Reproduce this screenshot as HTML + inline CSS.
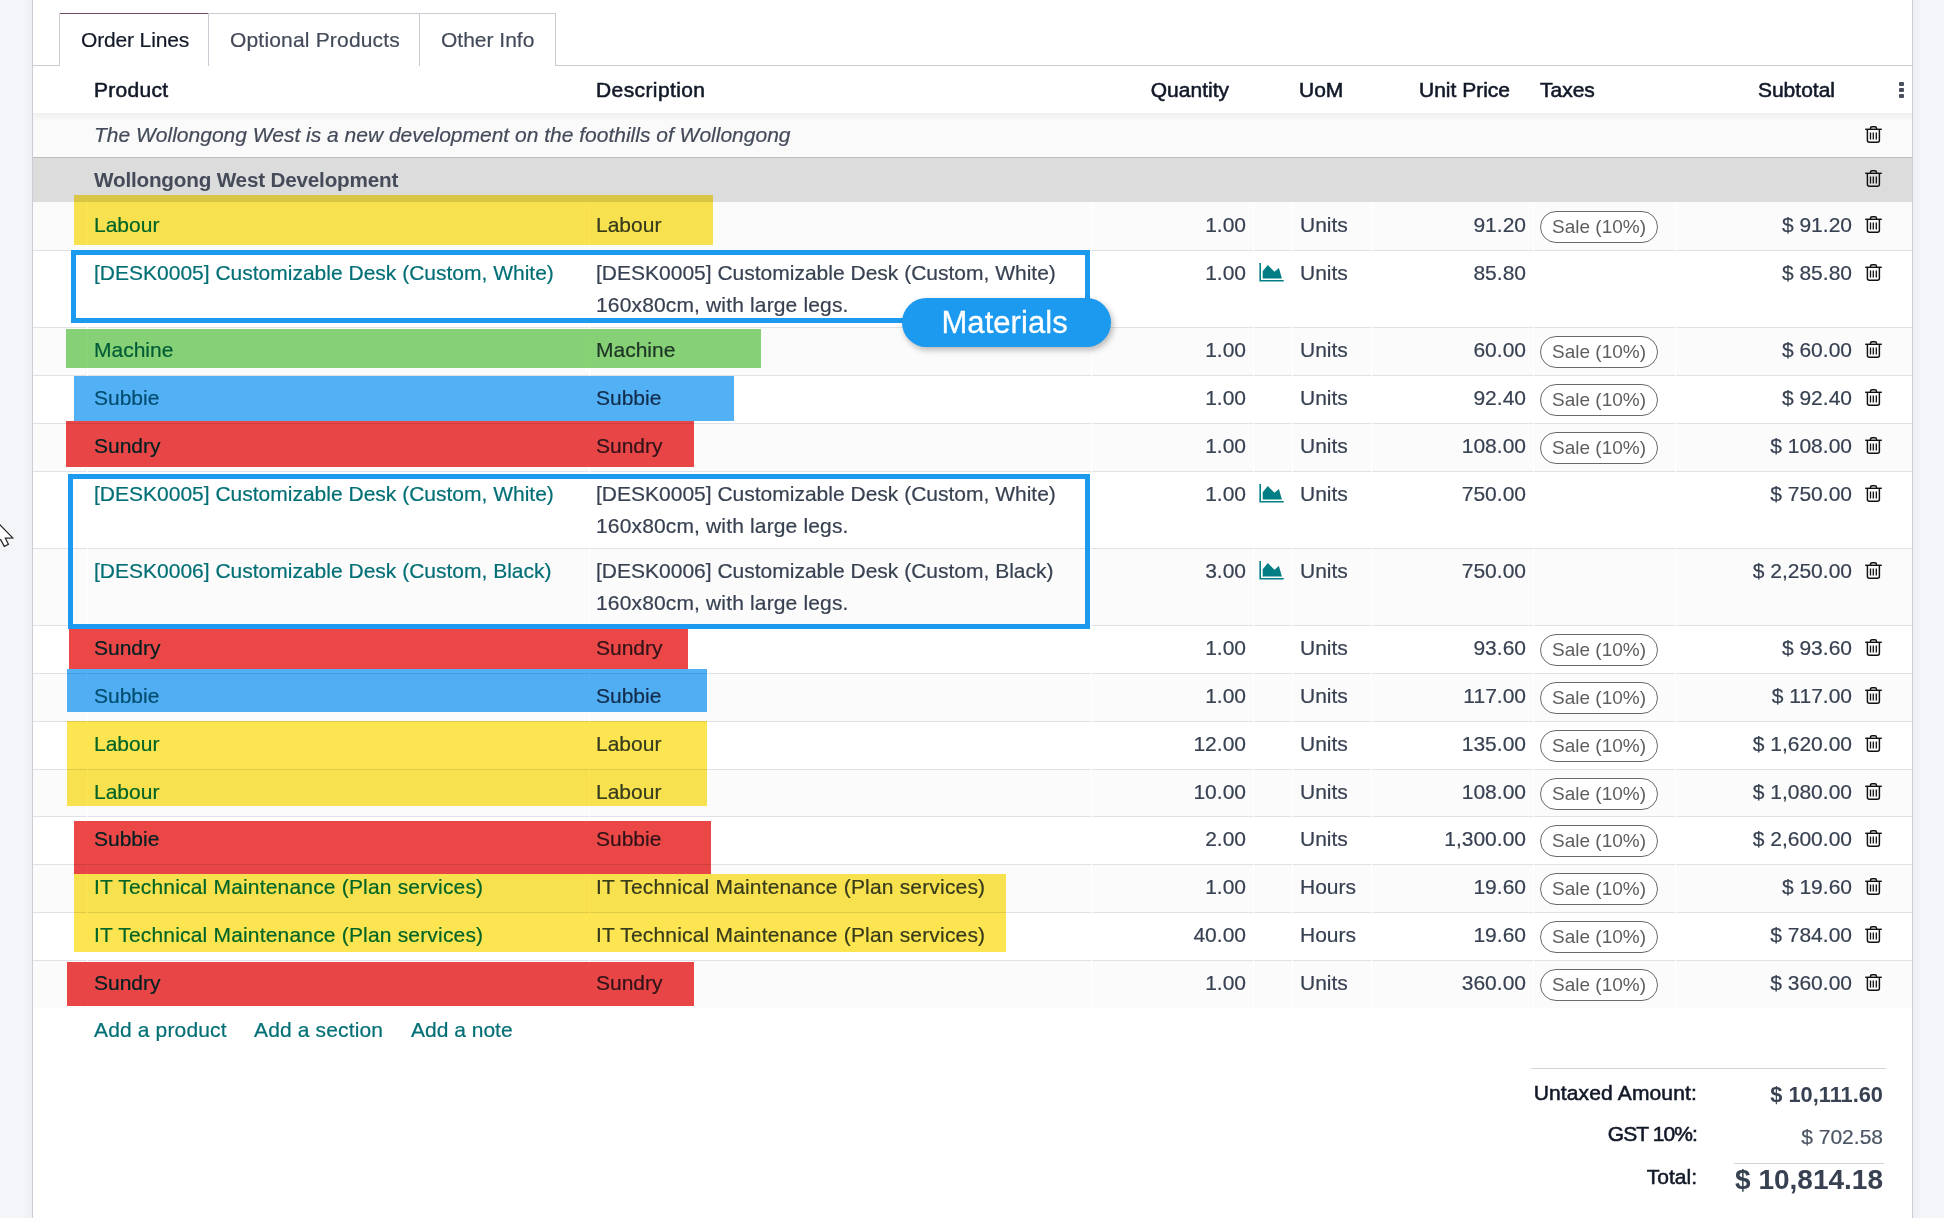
<!DOCTYPE html>
<html><head><meta charset="utf-8"><style>
html,body{margin:0;padding:0}
body{width:1944px;height:1218px;overflow:hidden;position:relative;background:#fff;font-family:"Liberation Sans",sans-serif}
.t{position:absolute;white-space:nowrap}
</style></head><body>
<div style="position:absolute;left:0px;top:0px;width:32px;height:1218px;background:linear-gradient(to right,#f4f5f9 0,#f3f5f9 22px,#edeff3 32px)"></div>
<div style="position:absolute;left:32px;top:0px;width:1px;height:1218px;background:#cacdd4"></div>
<div style="position:absolute;left:33px;top:0px;width:1879px;height:1218px;background:#fff"></div>
<div style="position:absolute;left:1912px;top:0px;width:1px;height:1218px;background:#cacdd4"></div>
<div style="position:absolute;left:1913px;top:0px;width:31px;height:1218px;background:linear-gradient(to left,#f4f5f9 0,#f3f5f9 22px,#edeff3 31px)"></div>
<div style="position:absolute;left:33px;top:65px;width:26px;height:1px;background:#c9ccd3"></div>
<div style="position:absolute;left:555px;top:65px;width:1357px;height:1px;background:#c9ccd3"></div>
<div style="position:absolute;left:59px;top:13px;width:150px;height:1px;background:#714b67"></div>
<div style="position:absolute;left:59px;top:13px;width:1px;height:53px;background:#c9ccd3"></div>
<div style="position:absolute;left:208px;top:13px;width:1px;height:53px;background:#c9ccd3"></div>
<div style="position:absolute;left:209px;top:13px;width:211px;height:1px;background:#c9ccd3"></div>
<div style="position:absolute;left:419px;top:13px;width:1px;height:53px;background:#c9ccd3"></div>
<div style="position:absolute;left:420px;top:13px;width:136px;height:1px;background:#c9ccd3"></div>
<div style="position:absolute;left:555px;top:13px;width:1px;height:53px;background:#c9ccd3"></div>
<div class="t" style="left:81px;top:27.22px;font-size:21px;line-height:25px;font-weight:400;color:#111827;font-style:normal;letter-spacing:-0.15px;-webkit-text-stroke:0.2px currentColor;">Order Lines</div>
<div class="t" style="left:230px;top:27.22px;font-size:21px;line-height:25px;font-weight:400;color:#434b5a;font-style:normal;letter-spacing:0.18px;-webkit-text-stroke:0.2px currentColor;">Optional Products</div>
<div class="t" style="left:441px;top:27.22px;font-size:21px;line-height:25px;font-weight:400;color:#434b5a;font-style:normal;-webkit-text-stroke:0.2px currentColor;">Other Info</div>
<div class="t" style="left:94px;top:77.22px;font-size:21px;line-height:25px;font-weight:400;color:#111827;font-style:normal;letter-spacing:0.3px;-webkit-text-stroke:0.55px currentColor;">Product</div>
<div class="t" style="left:596px;top:77.22px;font-size:21px;line-height:25px;font-weight:400;color:#111827;font-style:normal;letter-spacing:0.4px;-webkit-text-stroke:0.55px currentColor;">Description</div>
<div class="t" style="right:715px;top:77.22px;font-size:21px;line-height:25px;font-weight:400;color:#111827;font-style:normal;-webkit-text-stroke:0.55px currentColor;">Quantity</div>
<div class="t" style="left:1299px;top:77.22px;font-size:21px;line-height:25px;font-weight:400;color:#111827;font-style:normal;-webkit-text-stroke:0.55px currentColor;">UoM</div>
<div class="t" style="right:434px;top:77.22px;font-size:21px;line-height:25px;font-weight:400;color:#111827;font-style:normal;-webkit-text-stroke:0.55px currentColor;">Unit Price</div>
<div class="t" style="left:1540px;top:77.22px;font-size:21px;line-height:25px;font-weight:400;color:#111827;font-style:normal;-webkit-text-stroke:0.55px currentColor;">Taxes</div>
<div class="t" style="right:109px;top:77.22px;font-size:21px;line-height:25px;font-weight:400;color:#111827;font-style:normal;-webkit-text-stroke:0.55px currentColor;">Subtotal</div>
<div style="position:absolute;left:1899px;top:81.5px;width:4.5px;height:4.5px;border-radius:1px;background:#4a5060"></div>
<div style="position:absolute;left:1899px;top:87.5px;width:4.5px;height:4.5px;border-radius:1px;background:#4a5060"></div>
<div style="position:absolute;left:1899px;top:93.5px;width:4.5px;height:4.5px;border-radius:1px;background:#4a5060"></div>
<div style="position:absolute;left:33px;top:113px;width:1879px;height:44px;background:#fafafa"></div>
<div style="position:absolute;left:33px;top:113px;width:1879px;height:8px;background:linear-gradient(#eeeeee,#fafafa)"></div>
<div class="t" style="left:94px;top:122.22px;font-size:21px;line-height:25px;font-weight:400;color:#434a59;font-style:italic;-webkit-text-stroke:0.2px currentColor;">The Wollongong West is a new development on the foothills of Wollongong</div>
<div style="position:absolute;left:33px;top:157px;width:1879px;height:1px;background:#bdbdbd"></div>
<div style="position:absolute;left:33px;top:158px;width:1879px;height:44px;background:#dcdcdc"></div>
<div class="t" style="left:94px;top:167.33px;font-size:20.7px;line-height:25px;font-weight:700;color:#454b59;font-style:normal;letter-spacing:-0.2px;">Wollongong West Development</div>
<div style="position:absolute;left:1864px;top:124px;width:20px;height:22px"><svg width="20" height="22" viewBox="0 0 20 22" fill="none" stroke="#111" stroke-width="1.45"><path d="M1.2 5.3H17.8"/><path d="M6.5 5.3V4.3Q6.5 2.7 8.1 2.7H10.9Q12.5 2.7 12.5 4.3V5.3"/><path d="M3.4 5.3V16.3Q3.4 18.3 5.4 18.3H13.4Q15.4 18.3 15.4 16.3V5.3"/><path d="M6.5 8.4V15.5M9.3 8.4V15.5M12.3 8.4V15.5" stroke-width="1.3"/></svg></div>
<div style="position:absolute;left:1864px;top:168.3px;width:20px;height:22px"><svg width="20" height="22" viewBox="0 0 20 22" fill="none" stroke="#111" stroke-width="1.45"><path d="M1.2 5.3H17.8"/><path d="M6.5 5.3V4.3Q6.5 2.7 8.1 2.7H10.9Q12.5 2.7 12.5 4.3V5.3"/><path d="M3.4 5.3V16.3Q3.4 18.3 5.4 18.3H13.4Q15.4 18.3 15.4 16.3V5.3"/><path d="M6.5 8.4V15.5M9.3 8.4V15.5M12.3 8.4V15.5" stroke-width="1.3"/></svg></div>
<div style="position:absolute;left:33px;top:202px;width:1879px;height:48px;background:#fbfbfc"></div>
<div style="position:absolute;left:87px;top:202px;width:1px;height:48px;background:#ffffff"></div>
<div style="position:absolute;left:589px;top:202px;width:1px;height:48px;background:#ffffff"></div>
<div style="position:absolute;left:1091px;top:202px;width:1px;height:48px;background:#ffffff"></div>
<div style="position:absolute;left:1253px;top:202px;width:1px;height:48px;background:#ffffff"></div>
<div style="position:absolute;left:1292px;top:202px;width:1px;height:48px;background:#ffffff"></div>
<div style="position:absolute;left:1371px;top:202px;width:1px;height:48px;background:#ffffff"></div>
<div style="position:absolute;left:1533px;top:202px;width:1px;height:48px;background:#ffffff"></div>
<div style="position:absolute;left:1675px;top:202px;width:1px;height:48px;background:#ffffff"></div>
<div style="position:absolute;left:33px;top:250px;width:1879px;height:77px;background:#ffffff"></div>
<div style="position:absolute;left:33px;top:327px;width:1879px;height:48px;background:#fbfbfc"></div>
<div style="position:absolute;left:87px;top:327px;width:1px;height:48px;background:#ffffff"></div>
<div style="position:absolute;left:589px;top:327px;width:1px;height:48px;background:#ffffff"></div>
<div style="position:absolute;left:1091px;top:327px;width:1px;height:48px;background:#ffffff"></div>
<div style="position:absolute;left:1253px;top:327px;width:1px;height:48px;background:#ffffff"></div>
<div style="position:absolute;left:1292px;top:327px;width:1px;height:48px;background:#ffffff"></div>
<div style="position:absolute;left:1371px;top:327px;width:1px;height:48px;background:#ffffff"></div>
<div style="position:absolute;left:1533px;top:327px;width:1px;height:48px;background:#ffffff"></div>
<div style="position:absolute;left:1675px;top:327px;width:1px;height:48px;background:#ffffff"></div>
<div style="position:absolute;left:33px;top:375px;width:1879px;height:48px;background:#ffffff"></div>
<div style="position:absolute;left:33px;top:423px;width:1879px;height:48px;background:#fbfbfc"></div>
<div style="position:absolute;left:87px;top:423px;width:1px;height:48px;background:#ffffff"></div>
<div style="position:absolute;left:589px;top:423px;width:1px;height:48px;background:#ffffff"></div>
<div style="position:absolute;left:1091px;top:423px;width:1px;height:48px;background:#ffffff"></div>
<div style="position:absolute;left:1253px;top:423px;width:1px;height:48px;background:#ffffff"></div>
<div style="position:absolute;left:1292px;top:423px;width:1px;height:48px;background:#ffffff"></div>
<div style="position:absolute;left:1371px;top:423px;width:1px;height:48px;background:#ffffff"></div>
<div style="position:absolute;left:1533px;top:423px;width:1px;height:48px;background:#ffffff"></div>
<div style="position:absolute;left:1675px;top:423px;width:1px;height:48px;background:#ffffff"></div>
<div style="position:absolute;left:33px;top:471px;width:1879px;height:77px;background:#ffffff"></div>
<div style="position:absolute;left:33px;top:548px;width:1879px;height:77px;background:#fbfbfc"></div>
<div style="position:absolute;left:87px;top:548px;width:1px;height:77px;background:#ffffff"></div>
<div style="position:absolute;left:589px;top:548px;width:1px;height:77px;background:#ffffff"></div>
<div style="position:absolute;left:1091px;top:548px;width:1px;height:77px;background:#ffffff"></div>
<div style="position:absolute;left:1253px;top:548px;width:1px;height:77px;background:#ffffff"></div>
<div style="position:absolute;left:1292px;top:548px;width:1px;height:77px;background:#ffffff"></div>
<div style="position:absolute;left:1371px;top:548px;width:1px;height:77px;background:#ffffff"></div>
<div style="position:absolute;left:1533px;top:548px;width:1px;height:77px;background:#ffffff"></div>
<div style="position:absolute;left:1675px;top:548px;width:1px;height:77px;background:#ffffff"></div>
<div style="position:absolute;left:33px;top:625px;width:1879px;height:48px;background:#ffffff"></div>
<div style="position:absolute;left:33px;top:673px;width:1879px;height:48px;background:#fbfbfc"></div>
<div style="position:absolute;left:87px;top:673px;width:1px;height:48px;background:#ffffff"></div>
<div style="position:absolute;left:589px;top:673px;width:1px;height:48px;background:#ffffff"></div>
<div style="position:absolute;left:1091px;top:673px;width:1px;height:48px;background:#ffffff"></div>
<div style="position:absolute;left:1253px;top:673px;width:1px;height:48px;background:#ffffff"></div>
<div style="position:absolute;left:1292px;top:673px;width:1px;height:48px;background:#ffffff"></div>
<div style="position:absolute;left:1371px;top:673px;width:1px;height:48px;background:#ffffff"></div>
<div style="position:absolute;left:1533px;top:673px;width:1px;height:48px;background:#ffffff"></div>
<div style="position:absolute;left:1675px;top:673px;width:1px;height:48px;background:#ffffff"></div>
<div style="position:absolute;left:33px;top:721px;width:1879px;height:48px;background:#ffffff"></div>
<div style="position:absolute;left:33px;top:769px;width:1879px;height:47px;background:#fbfbfc"></div>
<div style="position:absolute;left:87px;top:769px;width:1px;height:47px;background:#ffffff"></div>
<div style="position:absolute;left:589px;top:769px;width:1px;height:47px;background:#ffffff"></div>
<div style="position:absolute;left:1091px;top:769px;width:1px;height:47px;background:#ffffff"></div>
<div style="position:absolute;left:1253px;top:769px;width:1px;height:47px;background:#ffffff"></div>
<div style="position:absolute;left:1292px;top:769px;width:1px;height:47px;background:#ffffff"></div>
<div style="position:absolute;left:1371px;top:769px;width:1px;height:47px;background:#ffffff"></div>
<div style="position:absolute;left:1533px;top:769px;width:1px;height:47px;background:#ffffff"></div>
<div style="position:absolute;left:1675px;top:769px;width:1px;height:47px;background:#ffffff"></div>
<div style="position:absolute;left:33px;top:816px;width:1879px;height:48px;background:#ffffff"></div>
<div style="position:absolute;left:33px;top:864px;width:1879px;height:48px;background:#fbfbfc"></div>
<div style="position:absolute;left:87px;top:864px;width:1px;height:48px;background:#ffffff"></div>
<div style="position:absolute;left:589px;top:864px;width:1px;height:48px;background:#ffffff"></div>
<div style="position:absolute;left:1091px;top:864px;width:1px;height:48px;background:#ffffff"></div>
<div style="position:absolute;left:1253px;top:864px;width:1px;height:48px;background:#ffffff"></div>
<div style="position:absolute;left:1292px;top:864px;width:1px;height:48px;background:#ffffff"></div>
<div style="position:absolute;left:1371px;top:864px;width:1px;height:48px;background:#ffffff"></div>
<div style="position:absolute;left:1533px;top:864px;width:1px;height:48px;background:#ffffff"></div>
<div style="position:absolute;left:1675px;top:864px;width:1px;height:48px;background:#ffffff"></div>
<div style="position:absolute;left:33px;top:912px;width:1879px;height:48px;background:#ffffff"></div>
<div style="position:absolute;left:33px;top:960px;width:1879px;height:48px;background:#fbfbfc"></div>
<div style="position:absolute;left:87px;top:960px;width:1px;height:48px;background:#ffffff"></div>
<div style="position:absolute;left:589px;top:960px;width:1px;height:48px;background:#ffffff"></div>
<div style="position:absolute;left:1091px;top:960px;width:1px;height:48px;background:#ffffff"></div>
<div style="position:absolute;left:1253px;top:960px;width:1px;height:48px;background:#ffffff"></div>
<div style="position:absolute;left:1292px;top:960px;width:1px;height:48px;background:#ffffff"></div>
<div style="position:absolute;left:1371px;top:960px;width:1px;height:48px;background:#ffffff"></div>
<div style="position:absolute;left:1533px;top:960px;width:1px;height:48px;background:#ffffff"></div>
<div style="position:absolute;left:1675px;top:960px;width:1px;height:48px;background:#ffffff"></div>
<div style="position:absolute;left:33px;top:250px;width:1879px;height:1px;background:#dfe1e6"></div>
<div style="position:absolute;left:87px;top:250px;width:1px;height:1px;background:#ffffff"></div>
<div style="position:absolute;left:589px;top:250px;width:1px;height:1px;background:#ffffff"></div>
<div style="position:absolute;left:1091px;top:250px;width:1px;height:1px;background:#ffffff"></div>
<div style="position:absolute;left:1253px;top:250px;width:1px;height:1px;background:#ffffff"></div>
<div style="position:absolute;left:1292px;top:250px;width:1px;height:1px;background:#ffffff"></div>
<div style="position:absolute;left:1371px;top:250px;width:1px;height:1px;background:#ffffff"></div>
<div style="position:absolute;left:1533px;top:250px;width:1px;height:1px;background:#ffffff"></div>
<div style="position:absolute;left:1675px;top:250px;width:1px;height:1px;background:#ffffff"></div>
<div style="position:absolute;left:33px;top:327px;width:1879px;height:1px;background:#dfe1e6"></div>
<div style="position:absolute;left:87px;top:327px;width:1px;height:1px;background:#ffffff"></div>
<div style="position:absolute;left:589px;top:327px;width:1px;height:1px;background:#ffffff"></div>
<div style="position:absolute;left:1091px;top:327px;width:1px;height:1px;background:#ffffff"></div>
<div style="position:absolute;left:1253px;top:327px;width:1px;height:1px;background:#ffffff"></div>
<div style="position:absolute;left:1292px;top:327px;width:1px;height:1px;background:#ffffff"></div>
<div style="position:absolute;left:1371px;top:327px;width:1px;height:1px;background:#ffffff"></div>
<div style="position:absolute;left:1533px;top:327px;width:1px;height:1px;background:#ffffff"></div>
<div style="position:absolute;left:1675px;top:327px;width:1px;height:1px;background:#ffffff"></div>
<div style="position:absolute;left:33px;top:375px;width:1879px;height:1px;background:#dfe1e6"></div>
<div style="position:absolute;left:87px;top:375px;width:1px;height:1px;background:#ffffff"></div>
<div style="position:absolute;left:589px;top:375px;width:1px;height:1px;background:#ffffff"></div>
<div style="position:absolute;left:1091px;top:375px;width:1px;height:1px;background:#ffffff"></div>
<div style="position:absolute;left:1253px;top:375px;width:1px;height:1px;background:#ffffff"></div>
<div style="position:absolute;left:1292px;top:375px;width:1px;height:1px;background:#ffffff"></div>
<div style="position:absolute;left:1371px;top:375px;width:1px;height:1px;background:#ffffff"></div>
<div style="position:absolute;left:1533px;top:375px;width:1px;height:1px;background:#ffffff"></div>
<div style="position:absolute;left:1675px;top:375px;width:1px;height:1px;background:#ffffff"></div>
<div style="position:absolute;left:33px;top:423px;width:1879px;height:1px;background:#dfe1e6"></div>
<div style="position:absolute;left:87px;top:423px;width:1px;height:1px;background:#ffffff"></div>
<div style="position:absolute;left:589px;top:423px;width:1px;height:1px;background:#ffffff"></div>
<div style="position:absolute;left:1091px;top:423px;width:1px;height:1px;background:#ffffff"></div>
<div style="position:absolute;left:1253px;top:423px;width:1px;height:1px;background:#ffffff"></div>
<div style="position:absolute;left:1292px;top:423px;width:1px;height:1px;background:#ffffff"></div>
<div style="position:absolute;left:1371px;top:423px;width:1px;height:1px;background:#ffffff"></div>
<div style="position:absolute;left:1533px;top:423px;width:1px;height:1px;background:#ffffff"></div>
<div style="position:absolute;left:1675px;top:423px;width:1px;height:1px;background:#ffffff"></div>
<div style="position:absolute;left:33px;top:471px;width:1879px;height:1px;background:#dfe1e6"></div>
<div style="position:absolute;left:87px;top:471px;width:1px;height:1px;background:#ffffff"></div>
<div style="position:absolute;left:589px;top:471px;width:1px;height:1px;background:#ffffff"></div>
<div style="position:absolute;left:1091px;top:471px;width:1px;height:1px;background:#ffffff"></div>
<div style="position:absolute;left:1253px;top:471px;width:1px;height:1px;background:#ffffff"></div>
<div style="position:absolute;left:1292px;top:471px;width:1px;height:1px;background:#ffffff"></div>
<div style="position:absolute;left:1371px;top:471px;width:1px;height:1px;background:#ffffff"></div>
<div style="position:absolute;left:1533px;top:471px;width:1px;height:1px;background:#ffffff"></div>
<div style="position:absolute;left:1675px;top:471px;width:1px;height:1px;background:#ffffff"></div>
<div style="position:absolute;left:33px;top:548px;width:1879px;height:1px;background:#dfe1e6"></div>
<div style="position:absolute;left:87px;top:548px;width:1px;height:1px;background:#ffffff"></div>
<div style="position:absolute;left:589px;top:548px;width:1px;height:1px;background:#ffffff"></div>
<div style="position:absolute;left:1091px;top:548px;width:1px;height:1px;background:#ffffff"></div>
<div style="position:absolute;left:1253px;top:548px;width:1px;height:1px;background:#ffffff"></div>
<div style="position:absolute;left:1292px;top:548px;width:1px;height:1px;background:#ffffff"></div>
<div style="position:absolute;left:1371px;top:548px;width:1px;height:1px;background:#ffffff"></div>
<div style="position:absolute;left:1533px;top:548px;width:1px;height:1px;background:#ffffff"></div>
<div style="position:absolute;left:1675px;top:548px;width:1px;height:1px;background:#ffffff"></div>
<div style="position:absolute;left:33px;top:625px;width:1879px;height:1px;background:#dfe1e6"></div>
<div style="position:absolute;left:87px;top:625px;width:1px;height:1px;background:#ffffff"></div>
<div style="position:absolute;left:589px;top:625px;width:1px;height:1px;background:#ffffff"></div>
<div style="position:absolute;left:1091px;top:625px;width:1px;height:1px;background:#ffffff"></div>
<div style="position:absolute;left:1253px;top:625px;width:1px;height:1px;background:#ffffff"></div>
<div style="position:absolute;left:1292px;top:625px;width:1px;height:1px;background:#ffffff"></div>
<div style="position:absolute;left:1371px;top:625px;width:1px;height:1px;background:#ffffff"></div>
<div style="position:absolute;left:1533px;top:625px;width:1px;height:1px;background:#ffffff"></div>
<div style="position:absolute;left:1675px;top:625px;width:1px;height:1px;background:#ffffff"></div>
<div style="position:absolute;left:33px;top:673px;width:1879px;height:1px;background:#dfe1e6"></div>
<div style="position:absolute;left:87px;top:673px;width:1px;height:1px;background:#ffffff"></div>
<div style="position:absolute;left:589px;top:673px;width:1px;height:1px;background:#ffffff"></div>
<div style="position:absolute;left:1091px;top:673px;width:1px;height:1px;background:#ffffff"></div>
<div style="position:absolute;left:1253px;top:673px;width:1px;height:1px;background:#ffffff"></div>
<div style="position:absolute;left:1292px;top:673px;width:1px;height:1px;background:#ffffff"></div>
<div style="position:absolute;left:1371px;top:673px;width:1px;height:1px;background:#ffffff"></div>
<div style="position:absolute;left:1533px;top:673px;width:1px;height:1px;background:#ffffff"></div>
<div style="position:absolute;left:1675px;top:673px;width:1px;height:1px;background:#ffffff"></div>
<div style="position:absolute;left:33px;top:721px;width:1879px;height:1px;background:#dfe1e6"></div>
<div style="position:absolute;left:87px;top:721px;width:1px;height:1px;background:#ffffff"></div>
<div style="position:absolute;left:589px;top:721px;width:1px;height:1px;background:#ffffff"></div>
<div style="position:absolute;left:1091px;top:721px;width:1px;height:1px;background:#ffffff"></div>
<div style="position:absolute;left:1253px;top:721px;width:1px;height:1px;background:#ffffff"></div>
<div style="position:absolute;left:1292px;top:721px;width:1px;height:1px;background:#ffffff"></div>
<div style="position:absolute;left:1371px;top:721px;width:1px;height:1px;background:#ffffff"></div>
<div style="position:absolute;left:1533px;top:721px;width:1px;height:1px;background:#ffffff"></div>
<div style="position:absolute;left:1675px;top:721px;width:1px;height:1px;background:#ffffff"></div>
<div style="position:absolute;left:33px;top:769px;width:1879px;height:1px;background:#dfe1e6"></div>
<div style="position:absolute;left:87px;top:769px;width:1px;height:1px;background:#ffffff"></div>
<div style="position:absolute;left:589px;top:769px;width:1px;height:1px;background:#ffffff"></div>
<div style="position:absolute;left:1091px;top:769px;width:1px;height:1px;background:#ffffff"></div>
<div style="position:absolute;left:1253px;top:769px;width:1px;height:1px;background:#ffffff"></div>
<div style="position:absolute;left:1292px;top:769px;width:1px;height:1px;background:#ffffff"></div>
<div style="position:absolute;left:1371px;top:769px;width:1px;height:1px;background:#ffffff"></div>
<div style="position:absolute;left:1533px;top:769px;width:1px;height:1px;background:#ffffff"></div>
<div style="position:absolute;left:1675px;top:769px;width:1px;height:1px;background:#ffffff"></div>
<div style="position:absolute;left:33px;top:816px;width:1879px;height:1px;background:#dfe1e6"></div>
<div style="position:absolute;left:87px;top:816px;width:1px;height:1px;background:#ffffff"></div>
<div style="position:absolute;left:589px;top:816px;width:1px;height:1px;background:#ffffff"></div>
<div style="position:absolute;left:1091px;top:816px;width:1px;height:1px;background:#ffffff"></div>
<div style="position:absolute;left:1253px;top:816px;width:1px;height:1px;background:#ffffff"></div>
<div style="position:absolute;left:1292px;top:816px;width:1px;height:1px;background:#ffffff"></div>
<div style="position:absolute;left:1371px;top:816px;width:1px;height:1px;background:#ffffff"></div>
<div style="position:absolute;left:1533px;top:816px;width:1px;height:1px;background:#ffffff"></div>
<div style="position:absolute;left:1675px;top:816px;width:1px;height:1px;background:#ffffff"></div>
<div style="position:absolute;left:33px;top:864px;width:1879px;height:1px;background:#dfe1e6"></div>
<div style="position:absolute;left:87px;top:864px;width:1px;height:1px;background:#ffffff"></div>
<div style="position:absolute;left:589px;top:864px;width:1px;height:1px;background:#ffffff"></div>
<div style="position:absolute;left:1091px;top:864px;width:1px;height:1px;background:#ffffff"></div>
<div style="position:absolute;left:1253px;top:864px;width:1px;height:1px;background:#ffffff"></div>
<div style="position:absolute;left:1292px;top:864px;width:1px;height:1px;background:#ffffff"></div>
<div style="position:absolute;left:1371px;top:864px;width:1px;height:1px;background:#ffffff"></div>
<div style="position:absolute;left:1533px;top:864px;width:1px;height:1px;background:#ffffff"></div>
<div style="position:absolute;left:1675px;top:864px;width:1px;height:1px;background:#ffffff"></div>
<div style="position:absolute;left:33px;top:912px;width:1879px;height:1px;background:#dfe1e6"></div>
<div style="position:absolute;left:87px;top:912px;width:1px;height:1px;background:#ffffff"></div>
<div style="position:absolute;left:589px;top:912px;width:1px;height:1px;background:#ffffff"></div>
<div style="position:absolute;left:1091px;top:912px;width:1px;height:1px;background:#ffffff"></div>
<div style="position:absolute;left:1253px;top:912px;width:1px;height:1px;background:#ffffff"></div>
<div style="position:absolute;left:1292px;top:912px;width:1px;height:1px;background:#ffffff"></div>
<div style="position:absolute;left:1371px;top:912px;width:1px;height:1px;background:#ffffff"></div>
<div style="position:absolute;left:1533px;top:912px;width:1px;height:1px;background:#ffffff"></div>
<div style="position:absolute;left:1675px;top:912px;width:1px;height:1px;background:#ffffff"></div>
<div style="position:absolute;left:33px;top:960px;width:1879px;height:1px;background:#dfe1e6"></div>
<div style="position:absolute;left:87px;top:960px;width:1px;height:1px;background:#ffffff"></div>
<div style="position:absolute;left:589px;top:960px;width:1px;height:1px;background:#ffffff"></div>
<div style="position:absolute;left:1091px;top:960px;width:1px;height:1px;background:#ffffff"></div>
<div style="position:absolute;left:1253px;top:960px;width:1px;height:1px;background:#ffffff"></div>
<div style="position:absolute;left:1292px;top:960px;width:1px;height:1px;background:#ffffff"></div>
<div style="position:absolute;left:1371px;top:960px;width:1px;height:1px;background:#ffffff"></div>
<div style="position:absolute;left:1533px;top:960px;width:1px;height:1px;background:#ffffff"></div>
<div style="position:absolute;left:1675px;top:960px;width:1px;height:1px;background:#ffffff"></div>
<div class="t" style="left:94px;top:212.22px;font-size:21px;line-height:25px;font-weight:400;color:#016f75;font-style:normal;-webkit-text-stroke:0.2px currentColor;">Labour</div>
<div class="t" style="left:596px;top:212.22px;font-size:21px;line-height:25px;font-weight:400;color:#374151;font-style:normal;-webkit-text-stroke:0.2px currentColor;">Labour</div>
<div class="t" style="right:698px;top:212.22px;font-size:21px;line-height:25px;font-weight:400;color:#374151;font-style:normal;-webkit-text-stroke:0.2px currentColor;">1.00</div>
<div class="t" style="left:1300px;top:212.22px;font-size:21px;line-height:25px;font-weight:400;color:#374151;font-style:normal;-webkit-text-stroke:0.2px currentColor;">Units</div>
<div class="t" style="right:418px;top:212.22px;font-size:21px;line-height:25px;font-weight:400;color:#374151;font-style:normal;-webkit-text-stroke:0.2px currentColor;">91.20</div>
<div style="position:absolute;left:1540px;top:211px;width:118px;height:32px;box-sizing:border-box;border:1.6px solid #6a6a6a;border-radius:999px;background:#fff"></div>
<div class="t" style="left:1552px;top:214.92px;font-size:19px;line-height:23px;font-weight:400;color:#5e5e5e;font-style:normal;">Sale (10%)</div>
<div class="t" style="right:92px;top:212.22px;font-size:21px;line-height:25px;font-weight:400;color:#374151;font-style:normal;-webkit-text-stroke:0.2px currentColor;">$ 91.20</div>
<div style="position:absolute;left:1864px;top:214.4px;width:20px;height:22px"><svg width="20" height="22" viewBox="0 0 20 22" fill="none" stroke="#111" stroke-width="1.45"><path d="M1.2 5.3H17.8"/><path d="M6.5 5.3V4.3Q6.5 2.7 8.1 2.7H10.9Q12.5 2.7 12.5 4.3V5.3"/><path d="M3.4 5.3V16.3Q3.4 18.3 5.4 18.3H13.4Q15.4 18.3 15.4 16.3V5.3"/><path d="M6.5 8.4V15.5M9.3 8.4V15.5M12.3 8.4V15.5" stroke-width="1.3"/></svg></div>
<div class="t" style="left:94px;top:260.22px;font-size:21px;line-height:25px;font-weight:400;color:#016f75;font-style:normal;-webkit-text-stroke:0.2px currentColor;">[DESK0005] Customizable Desk (Custom, White)</div>
<div class="t" style="left:596px;top:260.22px;font-size:21px;line-height:25px;font-weight:400;color:#374151;font-style:normal;-webkit-text-stroke:0.2px currentColor;">[DESK0005] Customizable Desk (Custom, White)</div>
<div class="t" style="left:596px;top:292.22px;font-size:21px;line-height:25px;font-weight:400;color:#374151;font-style:normal;letter-spacing:0.15px;-webkit-text-stroke:0.2px currentColor;">160x80cm, with large legs.</div>
<div class="t" style="right:698px;top:260.22px;font-size:21px;line-height:25px;font-weight:400;color:#374151;font-style:normal;-webkit-text-stroke:0.2px currentColor;">1.00</div>
<div style="position:absolute;left:1259px;top:263px;width:26px;height:20px"><svg width="26" height="20" viewBox="0 0 26 20"><path fill="#017e84" d="M0.4 0.1H2V16.9H24.7V18.6H0.4Z"/><path fill="#017e84" d="M3.7 15.6V8.3L8.8 2.1L15.5 8.8L19.9 5.1L22.9 15.6Z"/></svg></div>
<div class="t" style="left:1300px;top:260.22px;font-size:21px;line-height:25px;font-weight:400;color:#374151;font-style:normal;-webkit-text-stroke:0.2px currentColor;">Units</div>
<div class="t" style="right:418px;top:260.22px;font-size:21px;line-height:25px;font-weight:400;color:#374151;font-style:normal;-webkit-text-stroke:0.2px currentColor;">85.80</div>
<div class="t" style="right:92px;top:260.22px;font-size:21px;line-height:25px;font-weight:400;color:#374151;font-style:normal;-webkit-text-stroke:0.2px currentColor;">$ 85.80</div>
<div style="position:absolute;left:1864px;top:262.4px;width:20px;height:22px"><svg width="20" height="22" viewBox="0 0 20 22" fill="none" stroke="#111" stroke-width="1.45"><path d="M1.2 5.3H17.8"/><path d="M6.5 5.3V4.3Q6.5 2.7 8.1 2.7H10.9Q12.5 2.7 12.5 4.3V5.3"/><path d="M3.4 5.3V16.3Q3.4 18.3 5.4 18.3H13.4Q15.4 18.3 15.4 16.3V5.3"/><path d="M6.5 8.4V15.5M9.3 8.4V15.5M12.3 8.4V15.5" stroke-width="1.3"/></svg></div>
<div class="t" style="left:94px;top:337.22px;font-size:21px;line-height:25px;font-weight:400;color:#016f75;font-style:normal;-webkit-text-stroke:0.2px currentColor;">Machine</div>
<div class="t" style="left:596px;top:337.22px;font-size:21px;line-height:25px;font-weight:400;color:#374151;font-style:normal;-webkit-text-stroke:0.2px currentColor;">Machine</div>
<div class="t" style="right:698px;top:337.22px;font-size:21px;line-height:25px;font-weight:400;color:#374151;font-style:normal;-webkit-text-stroke:0.2px currentColor;">1.00</div>
<div class="t" style="left:1300px;top:337.22px;font-size:21px;line-height:25px;font-weight:400;color:#374151;font-style:normal;-webkit-text-stroke:0.2px currentColor;">Units</div>
<div class="t" style="right:418px;top:337.22px;font-size:21px;line-height:25px;font-weight:400;color:#374151;font-style:normal;-webkit-text-stroke:0.2px currentColor;">60.00</div>
<div style="position:absolute;left:1540px;top:336px;width:118px;height:32px;box-sizing:border-box;border:1.6px solid #6a6a6a;border-radius:999px;background:#fff"></div>
<div class="t" style="left:1552px;top:339.92px;font-size:19px;line-height:23px;font-weight:400;color:#5e5e5e;font-style:normal;">Sale (10%)</div>
<div class="t" style="right:92px;top:337.22px;font-size:21px;line-height:25px;font-weight:400;color:#374151;font-style:normal;-webkit-text-stroke:0.2px currentColor;">$ 60.00</div>
<div style="position:absolute;left:1864px;top:339.4px;width:20px;height:22px"><svg width="20" height="22" viewBox="0 0 20 22" fill="none" stroke="#111" stroke-width="1.45"><path d="M1.2 5.3H17.8"/><path d="M6.5 5.3V4.3Q6.5 2.7 8.1 2.7H10.9Q12.5 2.7 12.5 4.3V5.3"/><path d="M3.4 5.3V16.3Q3.4 18.3 5.4 18.3H13.4Q15.4 18.3 15.4 16.3V5.3"/><path d="M6.5 8.4V15.5M9.3 8.4V15.5M12.3 8.4V15.5" stroke-width="1.3"/></svg></div>
<div class="t" style="left:94px;top:385.22px;font-size:21px;line-height:25px;font-weight:400;color:#016f75;font-style:normal;-webkit-text-stroke:0.2px currentColor;">Subbie</div>
<div class="t" style="left:596px;top:385.22px;font-size:21px;line-height:25px;font-weight:400;color:#374151;font-style:normal;-webkit-text-stroke:0.2px currentColor;">Subbie</div>
<div class="t" style="right:698px;top:385.22px;font-size:21px;line-height:25px;font-weight:400;color:#374151;font-style:normal;-webkit-text-stroke:0.2px currentColor;">1.00</div>
<div class="t" style="left:1300px;top:385.22px;font-size:21px;line-height:25px;font-weight:400;color:#374151;font-style:normal;-webkit-text-stroke:0.2px currentColor;">Units</div>
<div class="t" style="right:418px;top:385.22px;font-size:21px;line-height:25px;font-weight:400;color:#374151;font-style:normal;-webkit-text-stroke:0.2px currentColor;">92.40</div>
<div style="position:absolute;left:1540px;top:384px;width:118px;height:32px;box-sizing:border-box;border:1.6px solid #6a6a6a;border-radius:999px;background:#fff"></div>
<div class="t" style="left:1552px;top:387.92px;font-size:19px;line-height:23px;font-weight:400;color:#5e5e5e;font-style:normal;">Sale (10%)</div>
<div class="t" style="right:92px;top:385.22px;font-size:21px;line-height:25px;font-weight:400;color:#374151;font-style:normal;-webkit-text-stroke:0.2px currentColor;">$ 92.40</div>
<div style="position:absolute;left:1864px;top:387.4px;width:20px;height:22px"><svg width="20" height="22" viewBox="0 0 20 22" fill="none" stroke="#111" stroke-width="1.45"><path d="M1.2 5.3H17.8"/><path d="M6.5 5.3V4.3Q6.5 2.7 8.1 2.7H10.9Q12.5 2.7 12.5 4.3V5.3"/><path d="M3.4 5.3V16.3Q3.4 18.3 5.4 18.3H13.4Q15.4 18.3 15.4 16.3V5.3"/><path d="M6.5 8.4V15.5M9.3 8.4V15.5M12.3 8.4V15.5" stroke-width="1.3"/></svg></div>
<div class="t" style="left:94px;top:433.22px;font-size:21px;line-height:25px;font-weight:400;color:#016f75;font-style:normal;-webkit-text-stroke:0.2px currentColor;">Sundry</div>
<div class="t" style="left:596px;top:433.22px;font-size:21px;line-height:25px;font-weight:400;color:#374151;font-style:normal;-webkit-text-stroke:0.2px currentColor;">Sundry</div>
<div class="t" style="right:698px;top:433.22px;font-size:21px;line-height:25px;font-weight:400;color:#374151;font-style:normal;-webkit-text-stroke:0.2px currentColor;">1.00</div>
<div class="t" style="left:1300px;top:433.22px;font-size:21px;line-height:25px;font-weight:400;color:#374151;font-style:normal;-webkit-text-stroke:0.2px currentColor;">Units</div>
<div class="t" style="right:418px;top:433.22px;font-size:21px;line-height:25px;font-weight:400;color:#374151;font-style:normal;-webkit-text-stroke:0.2px currentColor;">108.00</div>
<div style="position:absolute;left:1540px;top:432px;width:118px;height:32px;box-sizing:border-box;border:1.6px solid #6a6a6a;border-radius:999px;background:#fff"></div>
<div class="t" style="left:1552px;top:435.92px;font-size:19px;line-height:23px;font-weight:400;color:#5e5e5e;font-style:normal;">Sale (10%)</div>
<div class="t" style="right:92px;top:433.22px;font-size:21px;line-height:25px;font-weight:400;color:#374151;font-style:normal;-webkit-text-stroke:0.2px currentColor;">$ 108.00</div>
<div style="position:absolute;left:1864px;top:435.4px;width:20px;height:22px"><svg width="20" height="22" viewBox="0 0 20 22" fill="none" stroke="#111" stroke-width="1.45"><path d="M1.2 5.3H17.8"/><path d="M6.5 5.3V4.3Q6.5 2.7 8.1 2.7H10.9Q12.5 2.7 12.5 4.3V5.3"/><path d="M3.4 5.3V16.3Q3.4 18.3 5.4 18.3H13.4Q15.4 18.3 15.4 16.3V5.3"/><path d="M6.5 8.4V15.5M9.3 8.4V15.5M12.3 8.4V15.5" stroke-width="1.3"/></svg></div>
<div class="t" style="left:94px;top:481.22px;font-size:21px;line-height:25px;font-weight:400;color:#016f75;font-style:normal;-webkit-text-stroke:0.2px currentColor;">[DESK0005] Customizable Desk (Custom, White)</div>
<div class="t" style="left:596px;top:481.22px;font-size:21px;line-height:25px;font-weight:400;color:#374151;font-style:normal;-webkit-text-stroke:0.2px currentColor;">[DESK0005] Customizable Desk (Custom, White)</div>
<div class="t" style="left:596px;top:513.22px;font-size:21px;line-height:25px;font-weight:400;color:#374151;font-style:normal;letter-spacing:0.15px;-webkit-text-stroke:0.2px currentColor;">160x80cm, with large legs.</div>
<div class="t" style="right:698px;top:481.22px;font-size:21px;line-height:25px;font-weight:400;color:#374151;font-style:normal;-webkit-text-stroke:0.2px currentColor;">1.00</div>
<div style="position:absolute;left:1259px;top:484px;width:26px;height:20px"><svg width="26" height="20" viewBox="0 0 26 20"><path fill="#017e84" d="M0.4 0.1H2V16.9H24.7V18.6H0.4Z"/><path fill="#017e84" d="M3.7 15.6V8.3L8.8 2.1L15.5 8.8L19.9 5.1L22.9 15.6Z"/></svg></div>
<div class="t" style="left:1300px;top:481.22px;font-size:21px;line-height:25px;font-weight:400;color:#374151;font-style:normal;-webkit-text-stroke:0.2px currentColor;">Units</div>
<div class="t" style="right:418px;top:481.22px;font-size:21px;line-height:25px;font-weight:400;color:#374151;font-style:normal;-webkit-text-stroke:0.2px currentColor;">750.00</div>
<div class="t" style="right:92px;top:481.22px;font-size:21px;line-height:25px;font-weight:400;color:#374151;font-style:normal;-webkit-text-stroke:0.2px currentColor;">$ 750.00</div>
<div style="position:absolute;left:1864px;top:483.4px;width:20px;height:22px"><svg width="20" height="22" viewBox="0 0 20 22" fill="none" stroke="#111" stroke-width="1.45"><path d="M1.2 5.3H17.8"/><path d="M6.5 5.3V4.3Q6.5 2.7 8.1 2.7H10.9Q12.5 2.7 12.5 4.3V5.3"/><path d="M3.4 5.3V16.3Q3.4 18.3 5.4 18.3H13.4Q15.4 18.3 15.4 16.3V5.3"/><path d="M6.5 8.4V15.5M9.3 8.4V15.5M12.3 8.4V15.5" stroke-width="1.3"/></svg></div>
<div class="t" style="left:94px;top:558.22px;font-size:21px;line-height:25px;font-weight:400;color:#016f75;font-style:normal;-webkit-text-stroke:0.2px currentColor;">[DESK0006] Customizable Desk (Custom, Black)</div>
<div class="t" style="left:596px;top:558.22px;font-size:21px;line-height:25px;font-weight:400;color:#374151;font-style:normal;-webkit-text-stroke:0.2px currentColor;">[DESK0006] Customizable Desk (Custom, Black)</div>
<div class="t" style="left:596px;top:590.22px;font-size:21px;line-height:25px;font-weight:400;color:#374151;font-style:normal;letter-spacing:0.15px;-webkit-text-stroke:0.2px currentColor;">160x80cm, with large legs.</div>
<div class="t" style="right:698px;top:558.22px;font-size:21px;line-height:25px;font-weight:400;color:#374151;font-style:normal;-webkit-text-stroke:0.2px currentColor;">3.00</div>
<div style="position:absolute;left:1259px;top:561px;width:26px;height:20px"><svg width="26" height="20" viewBox="0 0 26 20"><path fill="#017e84" d="M0.4 0.1H2V16.9H24.7V18.6H0.4Z"/><path fill="#017e84" d="M3.7 15.6V8.3L8.8 2.1L15.5 8.8L19.9 5.1L22.9 15.6Z"/></svg></div>
<div class="t" style="left:1300px;top:558.22px;font-size:21px;line-height:25px;font-weight:400;color:#374151;font-style:normal;-webkit-text-stroke:0.2px currentColor;">Units</div>
<div class="t" style="right:418px;top:558.22px;font-size:21px;line-height:25px;font-weight:400;color:#374151;font-style:normal;-webkit-text-stroke:0.2px currentColor;">750.00</div>
<div class="t" style="right:92px;top:558.22px;font-size:21px;line-height:25px;font-weight:400;color:#374151;font-style:normal;-webkit-text-stroke:0.2px currentColor;">$ 2,250.00</div>
<div style="position:absolute;left:1864px;top:560.4px;width:20px;height:22px"><svg width="20" height="22" viewBox="0 0 20 22" fill="none" stroke="#111" stroke-width="1.45"><path d="M1.2 5.3H17.8"/><path d="M6.5 5.3V4.3Q6.5 2.7 8.1 2.7H10.9Q12.5 2.7 12.5 4.3V5.3"/><path d="M3.4 5.3V16.3Q3.4 18.3 5.4 18.3H13.4Q15.4 18.3 15.4 16.3V5.3"/><path d="M6.5 8.4V15.5M9.3 8.4V15.5M12.3 8.4V15.5" stroke-width="1.3"/></svg></div>
<div class="t" style="left:94px;top:635.22px;font-size:21px;line-height:25px;font-weight:400;color:#016f75;font-style:normal;-webkit-text-stroke:0.2px currentColor;">Sundry</div>
<div class="t" style="left:596px;top:635.22px;font-size:21px;line-height:25px;font-weight:400;color:#374151;font-style:normal;-webkit-text-stroke:0.2px currentColor;">Sundry</div>
<div class="t" style="right:698px;top:635.22px;font-size:21px;line-height:25px;font-weight:400;color:#374151;font-style:normal;-webkit-text-stroke:0.2px currentColor;">1.00</div>
<div class="t" style="left:1300px;top:635.22px;font-size:21px;line-height:25px;font-weight:400;color:#374151;font-style:normal;-webkit-text-stroke:0.2px currentColor;">Units</div>
<div class="t" style="right:418px;top:635.22px;font-size:21px;line-height:25px;font-weight:400;color:#374151;font-style:normal;-webkit-text-stroke:0.2px currentColor;">93.60</div>
<div style="position:absolute;left:1540px;top:634px;width:118px;height:32px;box-sizing:border-box;border:1.6px solid #6a6a6a;border-radius:999px;background:#fff"></div>
<div class="t" style="left:1552px;top:637.92px;font-size:19px;line-height:23px;font-weight:400;color:#5e5e5e;font-style:normal;">Sale (10%)</div>
<div class="t" style="right:92px;top:635.22px;font-size:21px;line-height:25px;font-weight:400;color:#374151;font-style:normal;-webkit-text-stroke:0.2px currentColor;">$ 93.60</div>
<div style="position:absolute;left:1864px;top:637.4px;width:20px;height:22px"><svg width="20" height="22" viewBox="0 0 20 22" fill="none" stroke="#111" stroke-width="1.45"><path d="M1.2 5.3H17.8"/><path d="M6.5 5.3V4.3Q6.5 2.7 8.1 2.7H10.9Q12.5 2.7 12.5 4.3V5.3"/><path d="M3.4 5.3V16.3Q3.4 18.3 5.4 18.3H13.4Q15.4 18.3 15.4 16.3V5.3"/><path d="M6.5 8.4V15.5M9.3 8.4V15.5M12.3 8.4V15.5" stroke-width="1.3"/></svg></div>
<div class="t" style="left:94px;top:683.22px;font-size:21px;line-height:25px;font-weight:400;color:#016f75;font-style:normal;-webkit-text-stroke:0.2px currentColor;">Subbie</div>
<div class="t" style="left:596px;top:683.22px;font-size:21px;line-height:25px;font-weight:400;color:#374151;font-style:normal;-webkit-text-stroke:0.2px currentColor;">Subbie</div>
<div class="t" style="right:698px;top:683.22px;font-size:21px;line-height:25px;font-weight:400;color:#374151;font-style:normal;-webkit-text-stroke:0.2px currentColor;">1.00</div>
<div class="t" style="left:1300px;top:683.22px;font-size:21px;line-height:25px;font-weight:400;color:#374151;font-style:normal;-webkit-text-stroke:0.2px currentColor;">Units</div>
<div class="t" style="right:418px;top:683.22px;font-size:21px;line-height:25px;font-weight:400;color:#374151;font-style:normal;-webkit-text-stroke:0.2px currentColor;">117.00</div>
<div style="position:absolute;left:1540px;top:682px;width:118px;height:32px;box-sizing:border-box;border:1.6px solid #6a6a6a;border-radius:999px;background:#fff"></div>
<div class="t" style="left:1552px;top:685.92px;font-size:19px;line-height:23px;font-weight:400;color:#5e5e5e;font-style:normal;">Sale (10%)</div>
<div class="t" style="right:92px;top:683.22px;font-size:21px;line-height:25px;font-weight:400;color:#374151;font-style:normal;-webkit-text-stroke:0.2px currentColor;">$ 117.00</div>
<div style="position:absolute;left:1864px;top:685.4px;width:20px;height:22px"><svg width="20" height="22" viewBox="0 0 20 22" fill="none" stroke="#111" stroke-width="1.45"><path d="M1.2 5.3H17.8"/><path d="M6.5 5.3V4.3Q6.5 2.7 8.1 2.7H10.9Q12.5 2.7 12.5 4.3V5.3"/><path d="M3.4 5.3V16.3Q3.4 18.3 5.4 18.3H13.4Q15.4 18.3 15.4 16.3V5.3"/><path d="M6.5 8.4V15.5M9.3 8.4V15.5M12.3 8.4V15.5" stroke-width="1.3"/></svg></div>
<div class="t" style="left:94px;top:731.22px;font-size:21px;line-height:25px;font-weight:400;color:#016f75;font-style:normal;-webkit-text-stroke:0.2px currentColor;">Labour</div>
<div class="t" style="left:596px;top:731.22px;font-size:21px;line-height:25px;font-weight:400;color:#374151;font-style:normal;-webkit-text-stroke:0.2px currentColor;">Labour</div>
<div class="t" style="right:698px;top:731.22px;font-size:21px;line-height:25px;font-weight:400;color:#374151;font-style:normal;-webkit-text-stroke:0.2px currentColor;">12.00</div>
<div class="t" style="left:1300px;top:731.22px;font-size:21px;line-height:25px;font-weight:400;color:#374151;font-style:normal;-webkit-text-stroke:0.2px currentColor;">Units</div>
<div class="t" style="right:418px;top:731.22px;font-size:21px;line-height:25px;font-weight:400;color:#374151;font-style:normal;-webkit-text-stroke:0.2px currentColor;">135.00</div>
<div style="position:absolute;left:1540px;top:730px;width:118px;height:32px;box-sizing:border-box;border:1.6px solid #6a6a6a;border-radius:999px;background:#fff"></div>
<div class="t" style="left:1552px;top:733.92px;font-size:19px;line-height:23px;font-weight:400;color:#5e5e5e;font-style:normal;">Sale (10%)</div>
<div class="t" style="right:92px;top:731.22px;font-size:21px;line-height:25px;font-weight:400;color:#374151;font-style:normal;-webkit-text-stroke:0.2px currentColor;">$ 1,620.00</div>
<div style="position:absolute;left:1864px;top:733.4px;width:20px;height:22px"><svg width="20" height="22" viewBox="0 0 20 22" fill="none" stroke="#111" stroke-width="1.45"><path d="M1.2 5.3H17.8"/><path d="M6.5 5.3V4.3Q6.5 2.7 8.1 2.7H10.9Q12.5 2.7 12.5 4.3V5.3"/><path d="M3.4 5.3V16.3Q3.4 18.3 5.4 18.3H13.4Q15.4 18.3 15.4 16.3V5.3"/><path d="M6.5 8.4V15.5M9.3 8.4V15.5M12.3 8.4V15.5" stroke-width="1.3"/></svg></div>
<div class="t" style="left:94px;top:779.22px;font-size:21px;line-height:25px;font-weight:400;color:#016f75;font-style:normal;-webkit-text-stroke:0.2px currentColor;">Labour</div>
<div class="t" style="left:596px;top:779.22px;font-size:21px;line-height:25px;font-weight:400;color:#374151;font-style:normal;-webkit-text-stroke:0.2px currentColor;">Labour</div>
<div class="t" style="right:698px;top:779.22px;font-size:21px;line-height:25px;font-weight:400;color:#374151;font-style:normal;-webkit-text-stroke:0.2px currentColor;">10.00</div>
<div class="t" style="left:1300px;top:779.22px;font-size:21px;line-height:25px;font-weight:400;color:#374151;font-style:normal;-webkit-text-stroke:0.2px currentColor;">Units</div>
<div class="t" style="right:418px;top:779.22px;font-size:21px;line-height:25px;font-weight:400;color:#374151;font-style:normal;-webkit-text-stroke:0.2px currentColor;">108.00</div>
<div style="position:absolute;left:1540px;top:778px;width:118px;height:32px;box-sizing:border-box;border:1.6px solid #6a6a6a;border-radius:999px;background:#fff"></div>
<div class="t" style="left:1552px;top:781.92px;font-size:19px;line-height:23px;font-weight:400;color:#5e5e5e;font-style:normal;">Sale (10%)</div>
<div class="t" style="right:92px;top:779.22px;font-size:21px;line-height:25px;font-weight:400;color:#374151;font-style:normal;-webkit-text-stroke:0.2px currentColor;">$ 1,080.00</div>
<div style="position:absolute;left:1864px;top:781.4px;width:20px;height:22px"><svg width="20" height="22" viewBox="0 0 20 22" fill="none" stroke="#111" stroke-width="1.45"><path d="M1.2 5.3H17.8"/><path d="M6.5 5.3V4.3Q6.5 2.7 8.1 2.7H10.9Q12.5 2.7 12.5 4.3V5.3"/><path d="M3.4 5.3V16.3Q3.4 18.3 5.4 18.3H13.4Q15.4 18.3 15.4 16.3V5.3"/><path d="M6.5 8.4V15.5M9.3 8.4V15.5M12.3 8.4V15.5" stroke-width="1.3"/></svg></div>
<div class="t" style="left:94px;top:826.22px;font-size:21px;line-height:25px;font-weight:400;color:#016f75;font-style:normal;-webkit-text-stroke:0.2px currentColor;">Subbie</div>
<div class="t" style="left:596px;top:826.22px;font-size:21px;line-height:25px;font-weight:400;color:#374151;font-style:normal;-webkit-text-stroke:0.2px currentColor;">Subbie</div>
<div class="t" style="right:698px;top:826.22px;font-size:21px;line-height:25px;font-weight:400;color:#374151;font-style:normal;-webkit-text-stroke:0.2px currentColor;">2.00</div>
<div class="t" style="left:1300px;top:826.22px;font-size:21px;line-height:25px;font-weight:400;color:#374151;font-style:normal;-webkit-text-stroke:0.2px currentColor;">Units</div>
<div class="t" style="right:418px;top:826.22px;font-size:21px;line-height:25px;font-weight:400;color:#374151;font-style:normal;-webkit-text-stroke:0.2px currentColor;">1,300.00</div>
<div style="position:absolute;left:1540px;top:825px;width:118px;height:32px;box-sizing:border-box;border:1.6px solid #6a6a6a;border-radius:999px;background:#fff"></div>
<div class="t" style="left:1552px;top:828.92px;font-size:19px;line-height:23px;font-weight:400;color:#5e5e5e;font-style:normal;">Sale (10%)</div>
<div class="t" style="right:92px;top:826.22px;font-size:21px;line-height:25px;font-weight:400;color:#374151;font-style:normal;-webkit-text-stroke:0.2px currentColor;">$ 2,600.00</div>
<div style="position:absolute;left:1864px;top:828.4px;width:20px;height:22px"><svg width="20" height="22" viewBox="0 0 20 22" fill="none" stroke="#111" stroke-width="1.45"><path d="M1.2 5.3H17.8"/><path d="M6.5 5.3V4.3Q6.5 2.7 8.1 2.7H10.9Q12.5 2.7 12.5 4.3V5.3"/><path d="M3.4 5.3V16.3Q3.4 18.3 5.4 18.3H13.4Q15.4 18.3 15.4 16.3V5.3"/><path d="M6.5 8.4V15.5M9.3 8.4V15.5M12.3 8.4V15.5" stroke-width="1.3"/></svg></div>
<div class="t" style="left:94px;top:874.22px;font-size:21px;line-height:25px;font-weight:400;color:#016f75;font-style:normal;letter-spacing:0.18px;-webkit-text-stroke:0.2px currentColor;">IT Technical Maintenance (Plan services)</div>
<div class="t" style="left:596px;top:874.22px;font-size:21px;line-height:25px;font-weight:400;color:#374151;font-style:normal;letter-spacing:0.18px;-webkit-text-stroke:0.2px currentColor;">IT Technical Maintenance (Plan services)</div>
<div class="t" style="right:698px;top:874.22px;font-size:21px;line-height:25px;font-weight:400;color:#374151;font-style:normal;-webkit-text-stroke:0.2px currentColor;">1.00</div>
<div class="t" style="left:1300px;top:874.22px;font-size:21px;line-height:25px;font-weight:400;color:#374151;font-style:normal;-webkit-text-stroke:0.2px currentColor;">Hours</div>
<div class="t" style="right:418px;top:874.22px;font-size:21px;line-height:25px;font-weight:400;color:#374151;font-style:normal;-webkit-text-stroke:0.2px currentColor;">19.60</div>
<div style="position:absolute;left:1540px;top:873px;width:118px;height:32px;box-sizing:border-box;border:1.6px solid #6a6a6a;border-radius:999px;background:#fff"></div>
<div class="t" style="left:1552px;top:876.92px;font-size:19px;line-height:23px;font-weight:400;color:#5e5e5e;font-style:normal;">Sale (10%)</div>
<div class="t" style="right:92px;top:874.22px;font-size:21px;line-height:25px;font-weight:400;color:#374151;font-style:normal;-webkit-text-stroke:0.2px currentColor;">$ 19.60</div>
<div style="position:absolute;left:1864px;top:876.4px;width:20px;height:22px"><svg width="20" height="22" viewBox="0 0 20 22" fill="none" stroke="#111" stroke-width="1.45"><path d="M1.2 5.3H17.8"/><path d="M6.5 5.3V4.3Q6.5 2.7 8.1 2.7H10.9Q12.5 2.7 12.5 4.3V5.3"/><path d="M3.4 5.3V16.3Q3.4 18.3 5.4 18.3H13.4Q15.4 18.3 15.4 16.3V5.3"/><path d="M6.5 8.4V15.5M9.3 8.4V15.5M12.3 8.4V15.5" stroke-width="1.3"/></svg></div>
<div class="t" style="left:94px;top:922.22px;font-size:21px;line-height:25px;font-weight:400;color:#016f75;font-style:normal;letter-spacing:0.18px;-webkit-text-stroke:0.2px currentColor;">IT Technical Maintenance (Plan services)</div>
<div class="t" style="left:596px;top:922.22px;font-size:21px;line-height:25px;font-weight:400;color:#374151;font-style:normal;letter-spacing:0.18px;-webkit-text-stroke:0.2px currentColor;">IT Technical Maintenance (Plan services)</div>
<div class="t" style="right:698px;top:922.22px;font-size:21px;line-height:25px;font-weight:400;color:#374151;font-style:normal;-webkit-text-stroke:0.2px currentColor;">40.00</div>
<div class="t" style="left:1300px;top:922.22px;font-size:21px;line-height:25px;font-weight:400;color:#374151;font-style:normal;-webkit-text-stroke:0.2px currentColor;">Hours</div>
<div class="t" style="right:418px;top:922.22px;font-size:21px;line-height:25px;font-weight:400;color:#374151;font-style:normal;-webkit-text-stroke:0.2px currentColor;">19.60</div>
<div style="position:absolute;left:1540px;top:921px;width:118px;height:32px;box-sizing:border-box;border:1.6px solid #6a6a6a;border-radius:999px;background:#fff"></div>
<div class="t" style="left:1552px;top:924.92px;font-size:19px;line-height:23px;font-weight:400;color:#5e5e5e;font-style:normal;">Sale (10%)</div>
<div class="t" style="right:92px;top:922.22px;font-size:21px;line-height:25px;font-weight:400;color:#374151;font-style:normal;-webkit-text-stroke:0.2px currentColor;">$ 784.00</div>
<div style="position:absolute;left:1864px;top:924.4px;width:20px;height:22px"><svg width="20" height="22" viewBox="0 0 20 22" fill="none" stroke="#111" stroke-width="1.45"><path d="M1.2 5.3H17.8"/><path d="M6.5 5.3V4.3Q6.5 2.7 8.1 2.7H10.9Q12.5 2.7 12.5 4.3V5.3"/><path d="M3.4 5.3V16.3Q3.4 18.3 5.4 18.3H13.4Q15.4 18.3 15.4 16.3V5.3"/><path d="M6.5 8.4V15.5M9.3 8.4V15.5M12.3 8.4V15.5" stroke-width="1.3"/></svg></div>
<div class="t" style="left:94px;top:970.22px;font-size:21px;line-height:25px;font-weight:400;color:#016f75;font-style:normal;-webkit-text-stroke:0.2px currentColor;">Sundry</div>
<div class="t" style="left:596px;top:970.22px;font-size:21px;line-height:25px;font-weight:400;color:#374151;font-style:normal;-webkit-text-stroke:0.2px currentColor;">Sundry</div>
<div class="t" style="right:698px;top:970.22px;font-size:21px;line-height:25px;font-weight:400;color:#374151;font-style:normal;-webkit-text-stroke:0.2px currentColor;">1.00</div>
<div class="t" style="left:1300px;top:970.22px;font-size:21px;line-height:25px;font-weight:400;color:#374151;font-style:normal;-webkit-text-stroke:0.2px currentColor;">Units</div>
<div class="t" style="right:418px;top:970.22px;font-size:21px;line-height:25px;font-weight:400;color:#374151;font-style:normal;-webkit-text-stroke:0.2px currentColor;">360.00</div>
<div style="position:absolute;left:1540px;top:969px;width:118px;height:32px;box-sizing:border-box;border:1.6px solid #6a6a6a;border-radius:999px;background:#fff"></div>
<div class="t" style="left:1552px;top:972.92px;font-size:19px;line-height:23px;font-weight:400;color:#5e5e5e;font-style:normal;">Sale (10%)</div>
<div class="t" style="right:92px;top:970.22px;font-size:21px;line-height:25px;font-weight:400;color:#374151;font-style:normal;-webkit-text-stroke:0.2px currentColor;">$ 360.00</div>
<div style="position:absolute;left:1864px;top:972.4px;width:20px;height:22px"><svg width="20" height="22" viewBox="0 0 20 22" fill="none" stroke="#111" stroke-width="1.45"><path d="M1.2 5.3H17.8"/><path d="M6.5 5.3V4.3Q6.5 2.7 8.1 2.7H10.9Q12.5 2.7 12.5 4.3V5.3"/><path d="M3.4 5.3V16.3Q3.4 18.3 5.4 18.3H13.4Q15.4 18.3 15.4 16.3V5.3"/><path d="M6.5 8.4V15.5M9.3 8.4V15.5M12.3 8.4V15.5" stroke-width="1.3"/></svg></div>
<div class="t" style="left:94px;top:1017.22px;font-size:21px;line-height:25px;font-weight:400;color:#016f75;font-style:normal;letter-spacing:0.15px;-webkit-text-stroke:0.2px currentColor;">Add a product</div>
<div class="t" style="left:254px;top:1017.22px;font-size:21px;line-height:25px;font-weight:400;color:#016f75;font-style:normal;letter-spacing:0.15px;-webkit-text-stroke:0.2px currentColor;">Add a section</div>
<div class="t" style="left:411px;top:1017.22px;font-size:21px;line-height:25px;font-weight:400;color:#016f75;font-style:normal;-webkit-text-stroke:0.2px currentColor;">Add a note</div>
<div style="position:absolute;left:1531px;top:1068px;width:355px;height:1px;background:#d1d5db"></div>
<div class="t" style="right:247px;top:1080.22px;font-size:21px;line-height:25px;font-weight:400;color:#111827;font-style:normal;letter-spacing:0.15px;-webkit-text-stroke:0.55px currentColor;">Untaxed Amount:</div>
<div class="t" style="right:61px;top:1082.05px;font-size:21.8px;line-height:26px;font-weight:700;color:#374151;font-style:normal;">$ 10,111.60</div>
<div class="t" style="right:247px;top:1121.22px;font-size:21px;line-height:25px;font-weight:400;color:#111827;font-style:normal;letter-spacing:-0.9px;-webkit-text-stroke:0.55px currentColor;">GST 10%:</div>
<div class="t" style="right:61px;top:1123.92px;font-size:21px;line-height:25px;font-weight:400;color:#4b5563;font-style:normal;-webkit-text-stroke:0.2px currentColor;">$ 702.58</div>
<div style="position:absolute;left:1734px;top:1163px;width:150px;height:1px;background:#d1d5db"></div>
<div class="t" style="right:247px;top:1164.22px;font-size:21px;line-height:25px;font-weight:400;color:#111827;font-style:normal;-webkit-text-stroke:0.55px currentColor;">Total:</div>
<div class="t" style="right:61px;top:1162.70px;font-size:28px;line-height:34px;font-weight:700;color:#374151;font-style:normal;">$ 10,814.18</div>
<div style="position:absolute;left:74px;top:195px;width:639px;height:50px;background:#fce550;mix-blend-mode:multiply"></div>
<div style="position:absolute;left:66px;top:329px;width:695px;height:39px;background:#88d476;mix-blend-mode:multiply"></div>
<div style="position:absolute;left:74px;top:376px;width:660px;height:45px;background:#52b1f5;mix-blend-mode:multiply"></div>
<div style="position:absolute;left:66px;top:421px;width:628px;height:46px;background:#ec4747;mix-blend-mode:multiply"></div>
<div style="position:absolute;left:69px;top:629px;width:619px;height:40px;background:#ec4747;mix-blend-mode:multiply"></div>
<div style="position:absolute;left:67px;top:669px;width:640px;height:43px;background:#52b1f5;mix-blend-mode:multiply"></div>
<div style="position:absolute;left:67px;top:721px;width:640px;height:85px;background:#fce550;mix-blend-mode:multiply"></div>
<div style="position:absolute;left:74px;top:821px;width:637px;height:53px;background:#ec4747;mix-blend-mode:multiply"></div>
<div style="position:absolute;left:74px;top:874px;width:932px;height:78px;background:#fce550;mix-blend-mode:multiply"></div>
<div style="position:absolute;left:67px;top:962px;width:627px;height:44px;background:#ec4747;mix-blend-mode:multiply"></div>
<div style="position:absolute;left:71px;top:250px;width:1019px;height:73px;border:5px solid #1b9af0;box-sizing:border-box"></div>
<div style="position:absolute;left:68px;top:474px;width:1022px;height:155px;border:5px solid #1b9af0;box-sizing:border-box"></div>
<div style="position:absolute;left:902px;top:298px;width:209px;height:49px;border-radius:25px;background:#1b9af0;box-shadow:2px 3px 6px rgba(0,0,0,0.28)"></div>
<div class="t" style="left:941.5px;top:303.76px;font-size:31px;line-height:37px;font-weight:400;color:#ffffff;font-style:normal;letter-spacing:0.05px;-webkit-text-stroke:0.3px #fff;">Materials</div>
<svg style="position:absolute;left:0;top:518px;overflow:visible" width="24" height="32" viewBox="0 0 24 32"><path d="M-6 0.7L12.7 19.9L5.4 20.2L8.4 26.2L4.3 28.3L0.7 21.6L-6 22Z" fill="#fff" stroke="#222" stroke-width="1.25" stroke-linejoin="miter"/></svg>
</body></html>
